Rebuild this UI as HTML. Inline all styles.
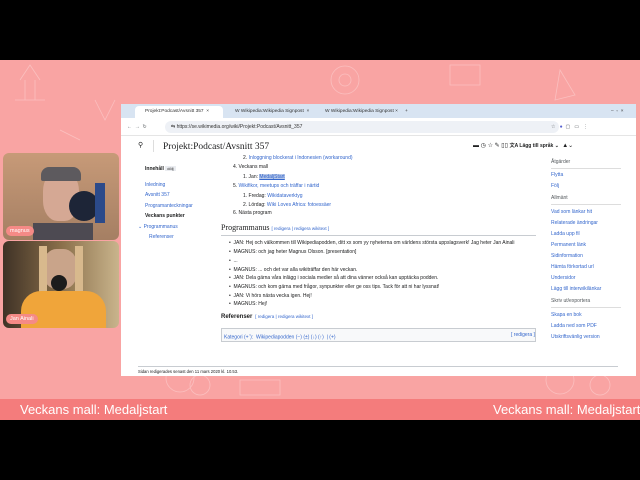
<!DOCTYPE html>
<html><head><meta charset="utf-8"><style>
*{margin:0;padding:0;box-sizing:border-box}
body{width:640px;height:480px;overflow:hidden;background:#000;font-family:"Liberation Sans",sans-serif;position:relative}
.abs{position:absolute}
.pink{left:0;top:60px;width:640px;height:340px;background:#f9a4a3;overflow:hidden}
.banner{left:0;top:399px;width:640px;height:21px;background:#f47c7c;color:#fff;font-size:13px;line-height:21px;white-space:nowrap;overflow:hidden}
.cam{left:3px;width:116px;height:87px;border-radius:6px;overflow:hidden}
.lbl{position:absolute;left:3px;bottom:4px;background:#f58a86;color:#fff;font-size:5.5px;padding:2px 4px;border-radius:5px}
.win{left:121px;top:104px;width:515px;height:272px;background:#fff;overflow:hidden}
.tabs{left:0;top:0;width:515px;height:14px;background:#d8e4f2}
.tab{position:absolute;top:2px;height:12px;font-size:4.8px;line-height:12px;color:#333;padding-left:10px;white-space:nowrap;overflow:hidden}
.addr{left:0;top:14px;width:515px;height:18px;background:#fff;border-bottom:1px solid #e5e5e5}
.t{position:absolute;font-size:5px;color:#202122;white-space:nowrap;line-height:6px}
.l{color:#3366cc}
.g{color:#54595d}
</style></head><body>
<div class="abs pink">
<svg width="640" height="340" style="position:absolute;left:0;top:0" fill="none" stroke="#fff" stroke-width="0.8" opacity=".3">
<path d="M20 20l10-15 10 15M15 40h30M25 20v20M35 20v20"/>
<circle cx="345" cy="20" r="14"/><circle cx="345" cy="20" r="6"/>
<path d="M560 10l15 25-20 5z"/><path d="M450 5h30v20h-30z"/>
<circle cx="560" cy="320" r="14"/><circle cx="600" cy="325" r="10"/>
<path d="M240 320h40v15h-40z"/><circle cx="180" cy="318" r="14"/><circle cx="200" cy="325" r="10"/>
<path d="M95 40l10 20 10-20"/><path d="M60 70l20 10"/>
</svg>
</div>
<div class="abs banner"><span style="position:absolute;left:20px">Veckans mall: Medaljstart</span><span style="position:absolute;left:493px">Veckans mall: Medaljstart</span></div>

<div class="abs cam" style="top:153px;background:linear-gradient(180deg,#c79a78,#a57f63)">
<div class="abs" style="left:40px;top:18px;width:36px;height:50px;background:#d5a894;border-radius:40%"></div>
<div class="abs" style="left:38px;top:14px;width:40px;height:14px;background:#5d5a5e;border-radius:8px 8px 2px 2px"></div>
<div class="abs" style="left:66px;top:38px;width:30px;height:30px;background:#1d2537;border-radius:50%"></div>
<div class="abs" style="left:92px;top:30px;width:10px;height:40px;background:#2b4a8a"></div>
<div class="abs" style="left:30px;top:70px;width:60px;height:20px;background:#4d4a52"></div>
<div class="lbl">magnus</div></div>
<div class="abs cam" style="top:241px;background:linear-gradient(90deg,#3f3226,#8a6f4a 50%,#c9b48c)">
<div class="abs" style="left:40px;top:8px;width:34px;height:40px;background:#c9a48a;border-radius:40%"></div>
<div class="abs" style="left:36px;top:5px;width:8px;height:70px;background:#d8b98d"></div>
<div class="abs" style="left:72px;top:5px;width:8px;height:70px;background:#d8b98d"></div>
<div class="abs" style="left:18px;top:50px;width:85px;height:40px;background:#f0a53a;border-radius:20px 20px 0 0"></div>
<div class="abs" style="left:48px;top:34px;width:16px;height:16px;background:#1c1c1c;border-radius:50%"></div>
<div class="lbl">Jan Ainali</div></div>

<div class="abs win">
<div class="abs tabs">
<div class="tab" style="left:14px;width:88px;background:#fff;border-radius:4px 4px 0 0">Projekt:Podcast/Avsnitt 357 &nbsp;×</div>
<div class="tab" style="left:104px;width:88px">W Wikipedia:Wikipedia Signpost &nbsp;×</div>
<div class="tab" style="left:194px;width:88px">W Wikipedia:Wikipedia Signpost ×</div>
<div class="tab" style="left:284px;width:10px;padding:0">+</div>
<div class="tab" style="left:490px;padding:0">–&nbsp;&nbsp;▫&nbsp;&nbsp;×</div>
</div>
<div class="abs addr">
<div class="t g" style="left:6px;top:6px">←&nbsp;&nbsp;→&nbsp;&nbsp;↻</div>
<div class="abs" style="left:44px;top:3px;width:394px;height:12px;background:#eef1f6;border-radius:6px"></div>
<div class="t" style="left:50px;top:6px;color:#333">⇆ https://se.wikimedia.org/wiki/Projekt:Podcast/Avsnitt_357</div>
<div class="t g" style="left:430px;top:6px">☆&nbsp;&nbsp;&nbsp;<span style="color:#5560d0">●</span>&nbsp;&nbsp;▢&nbsp;&nbsp;&nbsp;▭&nbsp;&nbsp;&nbsp;⋮</div>
</div>
<div class="t" style="left:17px;top:39px;font-size:7px">⚲</div>
<div class="abs" style="left:32px;top:36px;width:1px;height:12px;background:#ddd"></div>
<div class="t" style="left:42px;top:38px;font-family:'Liberation Serif',serif;font-size:9.5px;line-height:10px">Projekt:Podcast/Avsnitt 357</div>
<div class="t" style="left:352px;top:39px;font-size:6px">▬ ◷ ☆ ✎ ▯▯ <b style="font-size:5px">文A Lägg till språk ⌄</b> &nbsp;▲⌄</div>

<div class="t" style="left:24px;top:62px"><b>Innehåll</b> <span style="background:#eaecf0;padding:0 2px;font-size:4px">dölj</span></div>
<div class="t l" style="left:24px;top:78px">Inledning</div>
<div class="t l" style="left:24px;top:88px">Avsnitt 357</div>
<div class="t l" style="left:24px;top:99px">Programanteckningar</div>
<div class="t" style="left:24px;top:109px;font-weight:bold">Veckans punkter</div>
<div class="t l" style="left:17px;top:120px">⌄ Programmanus</div>
<div class="t l" style="left:28px;top:130px">Referenser</div>

<div class="t" style="left:122px;top:51px">2. <span class="l">Inloggning blockerat i Indonesien (workaround)</span></div>
<div class="t" style="left:112px;top:60px">4. Veckans mall</div>
<div class="t" style="left:122px;top:70px">1. Jan: <span class="l" style="background:#b8c8e8;text-decoration:underline">MedaljStart</span></div>
<div class="t l" style="left:112px;top:79px"><span style="color:#202122">5.</span> Wikifikor, meetups och träffar i närtid</div>
<div class="t" style="left:122px;top:89px">1. Fredag: <span class="l">Wikidataverktyg</span></div>
<div class="t" style="left:122px;top:98px">2. Lördag: <span class="l">Wiki Loves Africa: fotoessäer</span></div>
<div class="t" style="left:112px;top:106px">6. Nästa program</div>
<div class="t" style="left:100px;top:120px;font-family:'Liberation Serif',serif;font-size:8px;line-height:8px">Programmanus <span class="l" style="font-family:'Liberation Sans';font-size:4.5px">[ redigera | redigera wikitext ]</span></div>
<div class="abs" style="left:100px;top:131px;width:315px;height:1px;background:#c8ccd1"></div>
<div class="t" style="left:108px;top:136px">•&nbsp; JAN: Hej och välkommen till Wikipediapodden, ditt xx som yy nyheterna om världens största uppslagsverk! Jag heter Jan Ainali</div>
<div class="t" style="left:108px;top:145px">•&nbsp; MAGNUS: och jag heter Magnus Olsson. [presentation]</div>
<div class="t" style="left:108px;top:154px">•&nbsp; ...</div>
<div class="t" style="left:108px;top:163px">•&nbsp; MAGNUS: ... och det var alla wikiträffar den här veckan.</div>
<div class="t" style="left:108px;top:171px">•&nbsp; JAN: Dela gärna våra inlägg i sociala medier så att dina vänner också kan upptäcka podden.</div>
<div class="t" style="left:108px;top:180px">•&nbsp; MAGNUS: och kom gärna med frågor, synpunkter eller ge oss tips. Tack för att ni har lyssnat!</div>
<div class="t" style="left:108px;top:189px">•&nbsp; JAN: Vi hörs nästa vecka igen. Hej!</div>
<div class="t" style="left:108px;top:197px">•&nbsp; MAGNUS: Hej!</div>
<div class="t" style="left:100px;top:210px;font-weight:bold;font-size:6px">Referenser <span class="l" style="font-weight:normal;font-size:4.5px">&nbsp;[ redigera | redigera wikitext ]</span></div>
<div class="abs" style="left:100px;top:224px;width:315px;height:14px;background:#f8f9fa;border:1px solid #c8ccd1"></div>
<div class="t l" style="left:103px;top:228px">Kategori (+<sup style="font-size:3px">↑</sup>): &nbsp;Wikipediapodden (−) (±) (↓) (↑) &nbsp;| (+)</div>
<div class="t l" style="left:390px;top:228px">[ redigera ]</div>
<div class="abs" style="left:17px;top:262px;width:480px;height:1px;background:#c8ccd1"></div>
<div class="t" style="left:17px;top:265px;font-size:4.2px">Sidan redigerades senast den 11 mars 2020 kl. 10.53.</div>

<div class="t g" style="left:430px;top:55px">Åtgärder</div>
<div class="abs" style="left:430px;top:64px;width:70px;height:1px;background:#ddd"></div>
<div class="t l" style="left:430px;top:68px">Flytta</div>
<div class="t l" style="left:430px;top:79px">Följ</div>
<div class="t g" style="left:430px;top:91px">Allmänt</div>
<div class="abs" style="left:430px;top:100px;width:70px;height:1px;background:#ddd"></div>
<div class="t l" style="left:430px;top:105px">Vad som länkar hit</div>
<div class="t l" style="left:430px;top:116px">Relaterade ändringar</div>
<div class="t l" style="left:430px;top:127px">Ladda upp fil</div>
<div class="t l" style="left:430px;top:138px">Permanent länk</div>
<div class="t l" style="left:430px;top:149px">Sidinformation</div>
<div class="t l" style="left:430px;top:160px">Hämta förkortad url</div>
<div class="t l" style="left:430px;top:171px">Undersidor</div>
<div class="t l" style="left:430px;top:182px">Lägg till interwikilänkar</div>
<div class="t g" style="left:430px;top:194px">Skriv ut/exportera</div>
<div class="abs" style="left:430px;top:203px;width:70px;height:1px;background:#ddd"></div>
<div class="t l" style="left:430px;top:208px">Skapa en bok</div>
<div class="t l" style="left:430px;top:219px">Ladda ned som PDF</div>
<div class="t l" style="left:430px;top:230px">Utskriftsvänlig version</div>
</div>
</body></html>
